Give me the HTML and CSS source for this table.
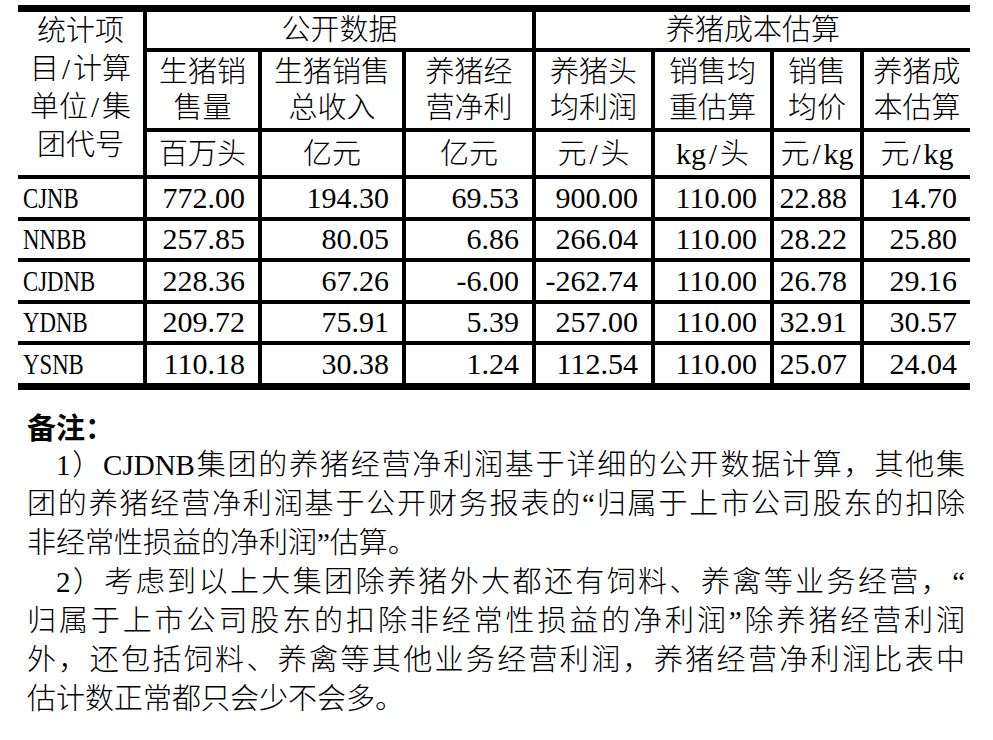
FILE: index.html
```html
<!DOCTYPE html>
<html lang="zh-CN">
<head>
<meta charset="utf-8">
<title>养猪成本估算</title>
<link rel="stylesheet" href="styles.css">
</head>
<body>
<div class="page">
  <div class="tbl">
    <div class="c corner">统计项<br>目<span class="sl">/</span>计算<br>单位<span class="sl">/</span>集<br>团代号</div>
    <div class="c grp g1">公开数据</div>
    <div class="c grp g2">养猪成本估算</div>

    <div class="c hd">生猪销<br>售量</div>
    <div class="c hd">生猪销售<br>总收入</div>
    <div class="c hd">养猪经<br>营净利</div>
    <div class="c hd">养猪头<br>均利润</div>
    <div class="c hd">销售均<br>重估算</div>
    <div class="c hd">销售<br>均价</div>
    <div class="c hd">养猪成<br>本估算</div>

    <div class="c unit">百万头</div>
    <div class="c unit">亿元</div>
    <div class="c unit">亿元</div>
    <div class="c unit">元<span class="sl">/</span>头</div>
    <div class="c unit"><span class="lat">kg</span><span class="sl">/</span>头</div>
    <div class="c unit">元<span class="sl">/</span><span class="lat">kg</span></div>
    <div class="c unit">元<span class="sl">/</span><span class="lat">kg</span></div>

    <div class="c name"><span class="nm">CJNB</span></div>
    <div class="c num">772.00</div>
    <div class="c num">194.30</div>
    <div class="c num">69.53</div>
    <div class="c num">900.00</div>
    <div class="c num">110.00</div>
    <div class="c num">22.88</div>
    <div class="c num">14.70</div>

    <div class="c name"><span class="nm">NNBB</span></div>
    <div class="c num">257.85</div>
    <div class="c num">80.05</div>
    <div class="c num">6.86</div>
    <div class="c num">266.04</div>
    <div class="c num">110.00</div>
    <div class="c num">28.22</div>
    <div class="c num">25.80</div>

    <div class="c name"><span class="nm">CJDNB</span></div>
    <div class="c num">228.36</div>
    <div class="c num">67.26</div>
    <div class="c num">-6.00</div>
    <div class="c num">-262.74</div>
    <div class="c num">110.00</div>
    <div class="c num">26.78</div>
    <div class="c num">29.16</div>

    <div class="c name"><span class="nm">YDNB</span></div>
    <div class="c num">209.72</div>
    <div class="c num">75.91</div>
    <div class="c num">5.39</div>
    <div class="c num">257.00</div>
    <div class="c num">110.00</div>
    <div class="c num">32.91</div>
    <div class="c num">30.57</div>

    <div class="c name"><span class="nm">YSNB</span></div>
    <div class="c num">110.18</div>
    <div class="c num">30.38</div>
    <div class="c num">1.24</div>
    <div class="c num">112.54</div>
    <div class="c num">110.00</div>
    <div class="c num">25.07</div>
    <div class="c num">24.04</div>
  </div>

  <div class="notes">
    <p class="ttl">备注：</p>
    <p class="para">
      <span class="ln first">1）CJDNB集团的养猪经营净利润基于详细的公开数据计算，其他集</span>
      <span class="ln">团的养猪经营净利润基于公开财务报表的“归属于上市公司股东的扣除</span>
      <span class="ln end">非经常性损益的净利润”估算。</span>
    </p>
    <p class="para">
      <span class="ln first">2）考虑到以上大集团除养猪外大都还有饲料、养禽等业务经营，“</span>
      <span class="ln">归属于上市公司股东的扣除非经常性损益的净利润”除养猪经营利润</span>
      <span class="ln">外，还包括饲料、养禽等其他业务经营利润，养猪经营净利润比表中</span>
      <span class="ln end">估计数正常都只会少不会多。</span>
    </p>
  </div>
</div>
</body>
</html>
```

FILE: styles.css
```css
html, body {
  margin: 0;
  padding: 0;
  background: #ffffff;
}

body {
  color: #000000;
  font-family: "Liberation Serif", "Noto Sans CJK SC", serif;
}

.page {
  width: 993px;
  height: 740px;
  overflow: hidden;
  padding-top: 5px;
  box-sizing: border-box;
}

.tbl {
  margin-left: 18px;
  width: 952px;
  display: grid;
  grid-template-columns: 125px 111px 140px 126px 115px 115px 86px 106px;
  grid-template-rows: 36px 76px 43px repeat(5, 37.5px);
  gap: 4px;
  padding: 7px 0;
  background: #000000;
}

.c {
  background: #ffffff;
  display: flex;
  align-items: center;
  justify-content: center;
  text-align: center;
  font-size: 29px;
  font-weight: 300;
  white-space: nowrap;
}

.corner {
  grid-row: 1 / span 3;
  display: block;
  line-height: 38px;
}

.g1 {
  grid-column: 2 / span 3;
  line-height: 36px;
}

.g2 {
  grid-column: 5 / span 4;
  line-height: 36px;
}

.hd {
  line-height: 36px;
}

.unit {
  line-height: 36px;
}

.lat {
  font-family: "Liberation Serif", serif;
  font-weight: 400;
  font-size: 30px;
}

.sl {
  font-family: "Liberation Serif", serif;
  font-size: 29px;
  font-weight: 400;
  padding: 0 3px;
}

.name {
  justify-content: flex-start;
  padding-left: 5px;
  font-size: 30px;
  font-weight: 400;
}

.nm {
  display: inline-block;
  transform: scaleX(0.76);
  transform-origin: left center;
}

.num {
  justify-content: flex-end;
  padding-right: 13px;
  font-size: 30px;
  font-weight: 400;
}

.notes {
  margin: 17px 0 0 27px;
  width: 938px;
  font-size: 29px;
  line-height: 39px;
}

.notes p {
  margin: 0;
}

.ttl {
  font-family: "Noto Sans CJK SC", sans-serif;
  font-weight: 700;
}

.para {
  font-weight: 300;
}

.ln {
  display: block;
  white-space: nowrap;
  text-align: justify;
  text-align-last: justify;
}

.ln.first {
  text-indent: 29px;
}

.ln.end {
  text-align-last: left;
}
```
